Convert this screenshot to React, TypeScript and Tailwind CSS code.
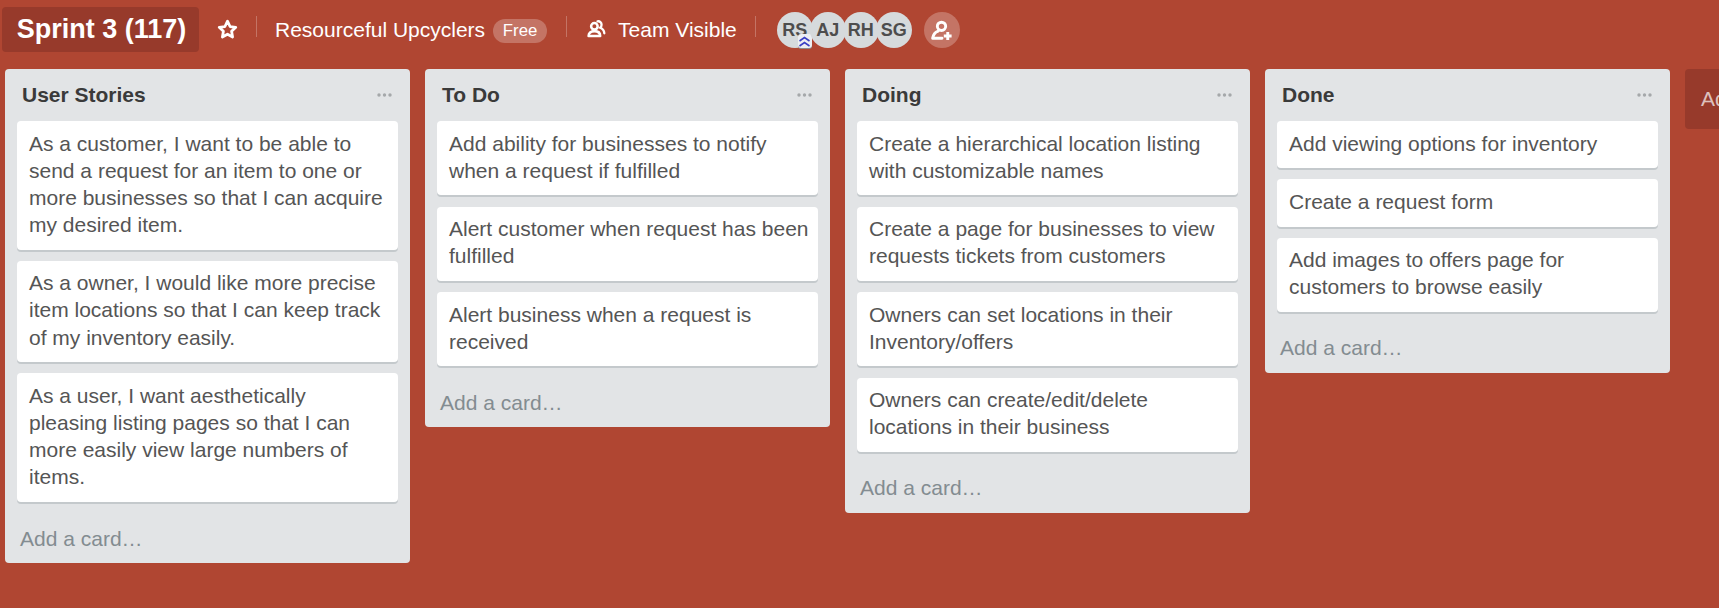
import React from "react";

const lists: { title: string; cards: string[][] }[] = [
  {
    title: "User Stories",
    cards: [
      ["As a customer, I want to be able to", "send a request for an item to one or", "more businesses so that I can acquire", "my desired item."],
      ["As a owner, I would like more precise", "item locations so that I can keep track", "of my inventory easily."],
      ["As a user, I want aesthetically", "pleasing listing pages so that I can", "more easily view large numbers of", "items."],
    ],
  },
  {
    title: "To Do",
    cards: [
      ["Add ability for businesses to notify", "when a request if fulfilled"],
      ["Alert customer when request has been", "fulfilled"],
      ["Alert business when a request is", "received"],
    ],
  },
  {
    title: "Doing",
    cards: [
      ["Create a hierarchical location listing", "with customizable names"],
      ["Create a page for businesses to view", "requests tickets from customers"],
      ["Owners can set locations in their", "Inventory/offers"],
      ["Owners can create/edit/delete", "locations in their business"],
    ],
  },
  {
    title: "Done",
    cards: [
      ["Add viewing options for inventory"],
      ["Create a request form"],
      ["Add images to offers page for", "customers to browse easily"],
    ],
  },
];

function Divider() {
  return <div className="w-px h-[21px] bg-white/25 shrink-0" />;
}

function StarIcon() {
  return (
    <svg width="21" height="21" viewBox="0 0 19 19" fill="none" stroke="white" strokeWidth="2.500" strokeLinejoin="round">
      <path d="M9.500 2l2.300 4.800 5.200.7-3.800 3.600.9 5.200-4.600-2.500-4.600 2.500.9-5.200L2 7.500l5.200-.7z" />
    </svg>
  );
}

function TeamIcon() {
  return (
    <svg width="19" height="18" viewBox="0 0 18 17" fill="none" stroke="white">
      <circle cx="7" cy="6" r="3.100" strokeWidth="2.400" />
      <path d="M1.500 15.200c0-3.100 2-4.700 5.500-4.700s5.500 1.600 5.500 4.700z" strokeWidth="2.400" strokeLinejoin="round" />
      <path d="M10 1.200c2.200-.4 3.800 1.200 3.800 3.200 0 1.200-.5 2.200-1.300 2.900 2 .8 3.700 2.400 3.900 5.200" strokeWidth="2.200" strokeLinecap="round" />
    </svg>
  );
}

function AddMemberIcon() {
  return (
    <svg width="25" height="25" viewBox="0 0 24 24" fill="none" stroke="white">
      <circle cx="12" cy="8" r="4" strokeWidth="2.800" />
      <path d="M8.800 12.500C5.800 13.500 4 16 3.500 19.500h9" strokeWidth="2.800" strokeLinecap="round" strokeLinejoin="round" />
      <path d="M18 13.500v7.500M14.200 17.300h7.500" strokeWidth="2.800" />
    </svg>
  );
}

function Avatar({ initials, badge }: { initials: string; badge?: boolean }) {
  return (
    <div className="relative w-9 h-9 rounded-full bg-[#d6dadc] flex items-center justify-center text-[#4d4d4d] font-bold text-[18px] -mr-[3px] shrink-0">
      {initials}
      {badge && (
        <div className="absolute left-[21px] top-[22px] w-[14px] h-[14px] bg-[#eceef2] rounded-[3px] shadow-[0_1px_0_#8c8c8c] flex items-center justify-center">
          <svg width="13" height="13" viewBox="0 0 13 13" fill="none" stroke="#3a3fc4" strokeWidth="1.600">
            <path d="M1.500 6L6.500 2.500l5 3.500M1.500 11l5-3.500 5 3.500" />
          </svg>
        </div>
      )}
    </div>
  );
}

function Card({ lines }: { lines: string[] }) {
  return (
    <div className="bg-white rounded-[4px] px-3 pt-[8.5px] pb-[11.5px] mb-[11.2px] shadow-[0_2px_0_#c4c9cc] text-[#555555] text-[21px] leading-[27.15px] whitespace-nowrap">
      {lines.map((l) => (
        <div key={l}>{l}</div>
      ))}
    </div>
  );
}

function List({ title, cards }: { title: string; cards: string[][] }) {
  return (
    <div className="w-[405px] shrink-0 bg-[#e2e4e6] rounded-[4px] flex flex-col self-start">
      <div className="h-[52px] pl-[17px] pr-[18px] flex items-center justify-between">
        <span className="text-[#3a3a3a] font-bold text-[21px]">{title}</span>
        <svg width="15" height="4" viewBox="0 0 15 4" fill="#a5a8aa">
          <circle cx="2" cy="2" r="1.700" />
          <circle cx="7.500" cy="2" r="1.700" />
          <circle cx="13" cy="2" r="1.700" />
        </svg>
      </div>
      <div className="px-3">
        {cards.map((c) => (
          <Card key={c[0]} lines={c} />
        ))}
      </div>
      <div className="pl-[15px] pt-[11.3px] pb-[11.4px] text-[#838c91] text-[21px] leading-[27.15px]">Add a card…</div>
    </div>
  );
}

export default function App() {
  return (
    <div className="w-[1719px] h-[608px] bg-[#b04632] overflow-hidden font-['Liberation_Sans',Arial,sans-serif]">
      <div className="h-[69px] flex items-start">
        <div className="ml-[2px] mt-[7px] w-[197px] h-[45px] pl-[2px] bg-[#973a2b] rounded-[4px] flex items-center justify-center text-white font-bold text-[27px] whitespace-nowrap">
          Sprint 3 (117)
        </div>
        <div className="ml-[18px] mt-[19px]">
          <StarIcon />
        </div>
        <div className="ml-[18px] mt-[16px]">
          <Divider />
        </div>
        <div className="ml-[18px] mt-[16px] text-white text-[21px] leading-[27px] whitespace-nowrap">Resourceful Upcyclers</div>
        <div className="ml-[8px] mt-[19px] w-[54px] h-[24px] rounded-full bg-white/25 text-white text-[16.8px] flex items-center justify-center">Free</div>
        <div className="ml-[19px] mt-[16px]">
          <Divider />
        </div>
        <div className="ml-[20px] mt-[20px]">
          <TeamIcon />
        </div>
        <div className="ml-[12px] mt-[16px] text-white text-[21px] leading-[27px] whitespace-nowrap">Team Visible</div>
        <div className="ml-[18px] mt-[16px]">
          <Divider />
        </div>
        <div className="ml-[21px] mt-[12px] flex">
          <Avatar initials="RS" badge />
          <Avatar initials="AJ" />
          <Avatar initials="RH" />
          <Avatar initials="SG" />
        </div>
        <div className="ml-[15px] mt-[12px] w-9 h-9 rounded-full bg-white/25 flex items-center justify-center">
          <AddMemberIcon />
        </div>
      </div>
      <div className="flex items-start gap-[15px] pl-[5px]">
        <List {...lists[0]} />
        <List {...lists[1]} />
        <List {...lists[2]} />
        <List {...lists[3]} />
        <div className="w-[300px] h-[60px] shrink-0 bg-[#973a2b] rounded-[4px] pl-4 flex items-center text-white/70 text-[21px] whitespace-nowrap">Add a list…</div>
      </div>
    </div>
  );
}
